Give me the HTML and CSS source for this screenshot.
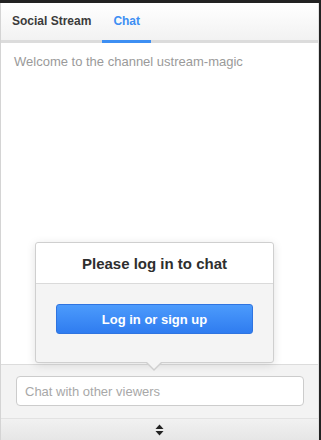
FILE: index.html
```html
<!DOCTYPE html>
<html lang="en">
<head>
    <meta charset="UTF-8">
    <meta name="viewport" content="width=device-width, initial-scale=1.0">
    <title>Chat</title>
    <link rel="stylesheet" href="styles.css">
</head>
<body>
<div class="panel">
    <div class="tabs">
        <div class="tab">Social Stream</div>
        <div class="tab active">Chat</div>
    </div>
    <div class="messages">
        <p class="welcome">Welcome to the channel ustream-magic</p>

        <div class="popover">
            <div class="popover-title">Please log in to chat</div>
            <div class="popover-body">
                <button class="login-btn">Log in or sign up</button>
            </div>
            <div class="popover-arrow"></div>
        </div>
    </div>
    <div class="composer">
        <input type="text" class="chat-input" placeholder="Chat with other viewers">
    </div>
    <div class="resizer">
        <svg width="9" height="12" viewBox="0 0 9 12">
            <path d="M4.5 0.5 L8.5 5 L0.5 5 Z" fill="#222"/>
            <path d="M0.5 7 L8.5 7 L4.5 11.5 Z" fill="#222"/>
        </svg>
    </div>
</div>
</body>
</html>
```

FILE: styles.css
```css
html, body {
    margin: 0;
    padding: 0;
}

body {
    background: #222;
    font-family: "Liberation Sans", Arial, sans-serif;
    width: 321px;
    height: 440px;
    overflow: hidden;
}

.panel {
    margin-top: 3px;
    width: 317px;
    height: 437px;
    background: #fff;
    border-left: 1px solid #d4d4d4;
    border-right: 1px solid #e2e2e2;
    display: flex;
    flex-direction: column;
}

.tabs {
    display: flex;
    height: 37px;
    background: linear-gradient(#fff, #f2f2f2);
    border-bottom: 3px solid #dcdcdc;
}

.tab {
    padding: 0 11px;
    font-size: 12px;
    font-weight: bold;
    color: #3b3b3b;
    line-height: 37px;
    margin-bottom: -3px;
    border-bottom: 3px solid transparent;
}

.tab.active {
    color: #3d8ff3;
    border-bottom-color: #3d8ff3;
}

.messages {
    flex: 1;
    position: relative;
}

.welcome {
    margin: 0;
    padding: 11px 13px;
    font-size: 13px;
    color: #9a9a9a;
}

.popover {
    position: absolute;
    left: 34px;
    top: 199px;
    width: 237px;
    background: #f4f4f4;
    border: 1px solid #cfcfcf;
    border-radius: 3px;
    box-shadow: 0 2px 10px rgba(0, 0, 0, 0.12);
    z-index: 2;
}

.popover-title {
    height: 40px;
    line-height: 42px;
    text-align: center;
    font-size: 15px;
    font-weight: bold;
    color: #2e2e2e;
    background: #fff;
    border-bottom: 1px solid #dadada;
    border-radius: 3px 3px 0 0;
}

.popover-body {
    padding: 20px 20px 28px;
    display: flex;
    justify-content: center;
}

.login-btn {
    width: 198px;
    height: 30px;
    border: 1px solid #2f74e0;
    border-radius: 3px;
    background: linear-gradient(#4c9bfc, #2f7cf0);
    color: #fff;
    font-family: "Liberation Sans", Arial, sans-serif;
    font-size: 13px;
    font-weight: bold;
    padding: 0;
}

.popover-arrow {
    position: absolute;
    left: 109px;
    bottom: -9px;
    width: 0;
    height: 0;
    border-left: 9px solid transparent;
    border-right: 9px solid transparent;
    border-top: 9px solid #cfcfcf;
}

.popover-arrow::after {
    content: "";
    position: absolute;
    left: -8px;
    top: -10px;
    border-left: 8px solid transparent;
    border-right: 8px solid transparent;
    border-top: 8px solid #f4f4f4;
}

.composer {
    background: #f3f3f3;
    border-top: 1px solid #dcdcdc;
    padding: 11px 14px 12px 15px;
}

.chat-input {
    box-sizing: border-box;
    width: 288px;
    height: 30px;
    border: 1px solid #cccccc;
    border-radius: 4px;
    background: #fff;
    padding: 0 8px;
    font-family: "Liberation Sans", Arial, sans-serif;
    font-size: 13px;
    display: block;
}

.chat-input::placeholder {
    color: #a8a8a8;
}

.resizer {
    height: 21px;
    border-top: 1px solid #e2e2e2;
    background: linear-gradient(#f1f1f1, #e6e6e6);
    display: flex;
    justify-content: center;
    align-items: center;
}
```
